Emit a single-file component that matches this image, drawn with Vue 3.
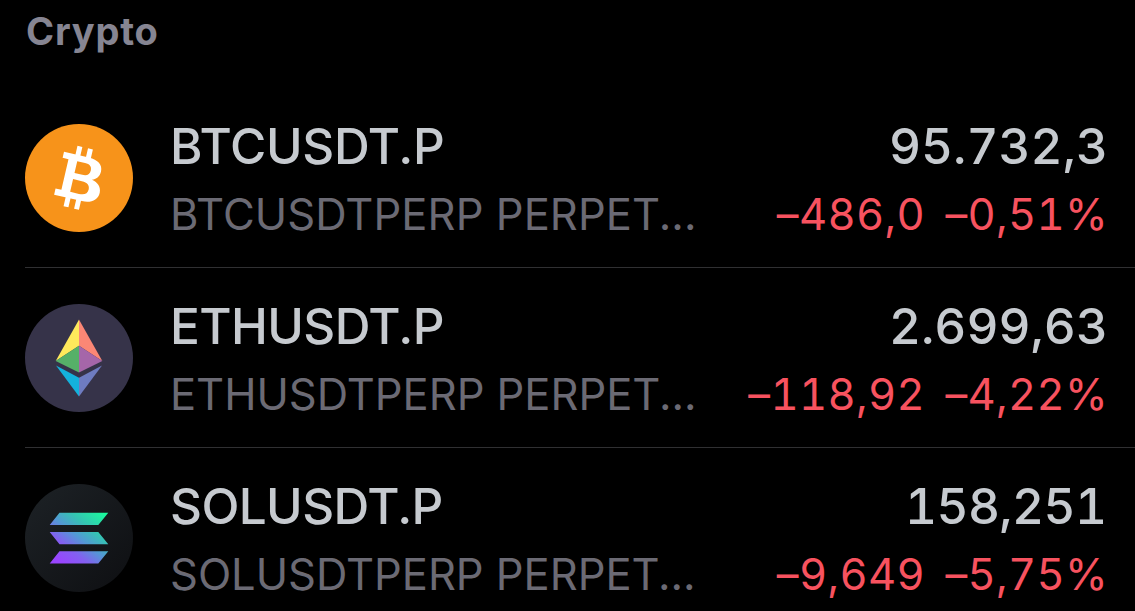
<script setup>
const rows = [
  { id: 'btc', ticker: 'BTCUSDT.P', desc: 'BTCUSDTPERP PERPET...', price: '95.732,3', change: '–486,0', pct: '–0,51%' },
  { id: 'eth', ticker: 'ETHUSDT.P', desc: 'ETHUSDTPERP PERPET...', price: '2.699,63', change: '–118,92', pct: '–4,22%' },
  { id: 'sol', ticker: 'SOLUSDT.P', desc: 'SOLUSDTPERP PERPET...', price: '158,251', change: '–9,649', pct: '–5,75%' },
]
</script>

<template>
  <main class="watchlist">
    <h2 class="section">Crypto</h2>
    <div v-for="row in rows" :key="row.id" class="row" :class="row.id">
      <svg v-if="row.id === 'btc'" class="logo" viewBox="0 0 108 108">
        <circle cx="54" cy="54" r="54" fill="#f7931a" />
        <g transform="translate(54 54) rotate(13)" fill="#fff">
          <path d="M-8.7-31h5v10h-5zM2.1-31h5v10h-5zM-8.7 21h5v10h-5zM2.1 21h5v10h-5z" />
          <path fill-rule="evenodd" d="M-20.5-22.2H5C14.5-22.2 20-18 20-11.3C20-6 17-2.6 13-1.2C19.2 0 23.5 4 23.5 9.6C23.5 17.5 17 21.8 8 21.8H-20.5V15.5H-14.5V-16H-20.5ZM-5.5-16V-3.8H2.5C7.5-3.8 9.8-6 9.8-10C9.8-14 7.5-16 2.5-16ZM-5.5 2.4V15.5H3.5C9.2 15.5 12 13.3 12 9C12 4.6 9.2 2.4 3.5 2.4Z" />
        </g>
      </svg>
      <svg v-else-if="row.id === 'eth'" class="logo" viewBox="0 0 108 108">
        <circle cx="54" cy="54" r="54" fill="#363349" />
        <path d="M54 15.5V41.7L30.7 57z" fill="#ffe95b" />
        <path d="M54 15.5V41.7L77.3 57z" fill="#fb8775" />
        <path d="M54 41.7V68.5L30.7 57z" fill="#56b068" />
        <path d="M54 41.7V68.5L77.3 57z" fill="#a566a9" />
        <path d="M31 61.5L54 73.7V92.5z" fill="#14b2dc" />
        <path d="M77 61.5L54 73.7V92.5z" fill="#6e7cc1" />
      </svg>
      <svg v-else class="logo" viewBox="0 0 108 108">
        <defs>
          <linearGradient id="disc" x1="0" y1="0" x2="1" y2="1">
            <stop offset="0" stop-color="#1d2226" />
            <stop offset="1" stop-color="#0e0f12" />
          </linearGradient>
          <linearGradient id="bars" gradientUnits="userSpaceOnUse" x1="32" y1="82" x2="76" y2="26">
            <stop offset="0.08" stop-color="#9945ff" />
            <stop offset="0.3" stop-color="#8360f0" />
            <stop offset="0.5" stop-color="#5497d5" />
            <stop offset="0.7" stop-color="#36c2b4" />
            <stop offset="1" stop-color="#19fb9b" />
          </linearGradient>
        </defs>
        <circle cx="54" cy="54" r="54" fill="url(#disc)" />
        <path d="M34.5 28.7H83.3L73.3 41H24.7zM24.7 48H73.3L83.3 60.2H34.5zM34.5 67.2H83.3L73.3 79.4H24.7z" fill="url(#bars)" />
      </svg>
      <div class="names">
        <div class="ticker">{{ row.ticker }}</div>
        <div class="desc">{{ row.desc }}</div>
      </div>
      <div class="values">
        <div class="price">{{ row.price }}</div>
        <div class="delta"><span>{{ row.change }}</span><span>{{ row.pct }}</span></div>
      </div>
    </div>
  </main>
</template>

<style>
body {
  background: #000;
  overflow: hidden;
}
</style>

<style scoped>
.watchlist {
  box-sizing: border-box;
  width: 100%;
  height: 611px;
  padding-left: 25px;
  overflow: hidden;
  background: #000;
  font-family: Inter, "Liberation Sans", sans-serif;
  white-space: nowrap;
}
.section {
  margin: 0;
  height: 88px;
  box-sizing: border-box;
  padding: 7px 0 0 1px;
  font-size: 38px;
  line-height: 48px;
  font-weight: 700;
  letter-spacing: 0.8px;
  color: #868592;
}
.row {
  box-sizing: border-box;
  height: 180px;
  padding-right: 27px;
  border-bottom: 1px solid #303032;
  display: flex;
  align-items: flex-start;
}
.logo {
  width: 108px;
  height: 108px;
  margin-top: 36px;
  flex: none;
}
.names {
  margin: 28px 0 0 37px;
  flex: 1;
}
.values {
  margin-top: 28px;
  text-align: right;
  font-variant-numeric: tabular-nums;
}
.ticker,
.price {
  font-size: 49.5px;
  line-height: 60px;
  font-weight: 500;
  color: #c6cacf;
}
.ticker {
  letter-spacing: -0.3px;
}
.eth .ticker,
.sol .ticker {
  letter-spacing: -0.6px;
}
.sol .price {
  margin-right: 1.5px;
  letter-spacing: -0.6px;
}
.desc,
.delta {
  margin-top: 8px;
  font-size: 43.5px;
  line-height: 60px;
  font-weight: 400;
}
.desc {
  color: #6b6a74;
  letter-spacing: 0.07px;
}
.eth .desc,
.sol .desc {
  letter-spacing: -0.03px;
}
.delta {
  display: flex;
  justify-content: flex-end;
  gap: 20.5px;
  letter-spacing: 0.3px;
  color: #f7525f;
}
</style>
